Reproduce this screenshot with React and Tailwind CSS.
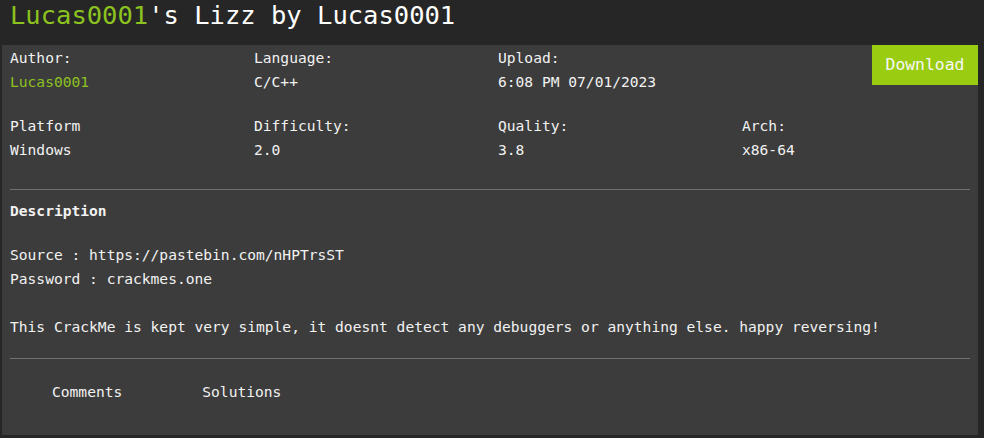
import React from 'react';

const mono = { fontFamily: '"DejaVu Sans Mono", "Liberation Mono", monospace' };

const Field = ({ label, value, green }) => (
  <div className="w-[244px] shrink-0">
    <div>{label}</div>
    <div className={green ? 'text-[#8cc21f]' : ''}>{value}</div>
  </div>
);

const App = () => {
  return (
    <div
      className="w-[984px] h-[438px] bg-[#262626] text-[#f2f2f2] overflow-hidden"
      style={mono}
    >
      <h1 className="h-[45px] pl-[10px] pt-[3px] text-[25.5px] leading-none text-white">
        <span className="text-[#8cc21f]">Lucas0001</span>'s Lizz by Lucas0001
      </h1>

      <div className="ml-[2px] w-[976px] h-[390px] bg-[#3c3c3c] pl-[8px] text-[14.6px] leading-[24px]">
        {/* top row */}
        <div className="flex pt-[1px]">
          <Field label="Author:" value="Lucas0001" green />
          <Field label="Language:" value="C/C++" />
          <Field label="Upload:" value="6:08 PM 07/01/2023" />
          <button className="ml-auto -mt-[1px] w-[106px] h-[40px] bg-[#9acd12] text-[#f7f7f7] text-[16.4px] leading-none">
            Download
          </button>
        </div>

        <div className="flex mt-[20px]">
          <Field label="Platform" value="Windows" />
          <Field label="Difficulty:" value="2.0" />
          <Field label="Quality:" value="3.8" />
          <Field label="Arch:" value="x86-64" />
        </div>

        <div className="mt-[27px] mr-[8px] h-px bg-[#707070]" />

        <div className="mt-[9px] font-bold">Description</div>

        <div className="mt-[20px]">
          <div>Source : https://pastebin.com/nHPTrsST</div>
          <div>Password : crackmes.one</div>
          <div>&nbsp;</div>
          <div>
            This CrackMe is kept very simple, it doesnt detect any debuggers or anything else. happy reversing!
          </div>
        </div>

        <div className="mt-[19px] mr-[8px] h-px bg-[#707070]" />

        <div className="flex mt-[21px] pl-[42px] gap-[80px]">
          <span>Comments</span>
          <span>Solutions</span>
        </div>
      </div>
    </div>
  );
};

export default App;
